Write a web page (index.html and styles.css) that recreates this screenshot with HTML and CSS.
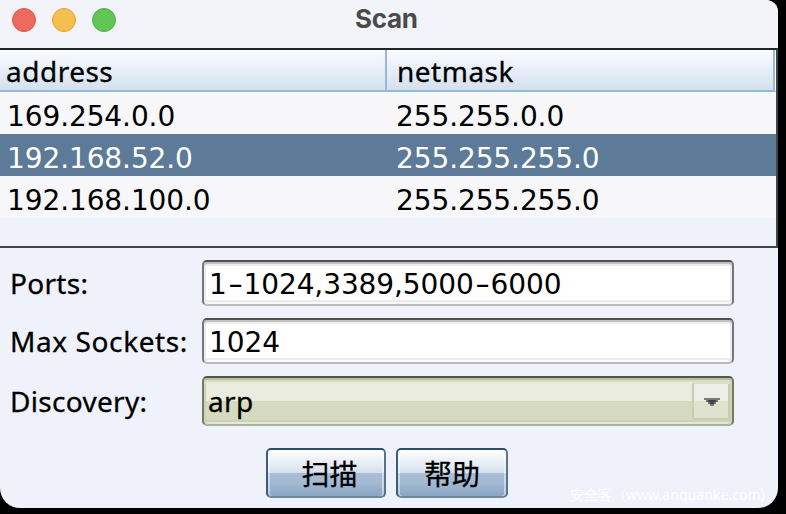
FILE: index.html
```html
<!DOCTYPE html>
<html lang="zh">
<head>
<meta charset="utf-8">
<title>Scan</title>
<link rel="stylesheet" href="styles.css">
</head>
<body>
<main class="window">
  <header class="titlebar">
    <div class="lights"><i class="light close"></i><i class="light minimize"></i><i class="light zoom"></i></div>
    <h1 class="title">Scan</h1>
  </header>
  <section class="table">
    <div class="row head"><span class="cell">address</span><span class="cell second">netmask</span></div>
    <div class="row"><span class="cell">169.254.0.0</span><span class="cell second">255.255.0.0</span></div>
    <div class="row selected"><span class="cell">192.168.52.0</span><span class="cell second">255.255.255.0</span></div>
    <div class="row"><span class="cell">192.168.100.0</span><span class="cell second">255.255.255.0</span></div>
  </section>
  <section class="form">
    <div class="label ports-label">Ports:</div>
    <div class="field digits">1<span class="dash">-</span>1024,3389,5000<span class="dash">-</span>6000</div>
    <div class="label sockets-label">Max Sockets:</div>
    <div class="field digits">1024</div>
    <div class="label discovery-label">Discovery:</div>
    <div class="field combo"><span>arp</span>
      <div class="drop"><svg width="16" height="8" viewBox="0 0 16 8" shape-rendering="crispEdges"><path fill="#777" d="M0 0h16v2h-2v2h-2v2h-2v2H6V6H4V4H2V2H0z"/><path fill="#444" d="M4 2h8v2h-2v2H6V4H4z"/></svg></div>
    </div>
  </section>
  <footer class="actions">
    <div class="button scan">扫描</div>
    <div class="button help">帮助</div>
  </footer>
</main>
<div class="watermark">安全客（ www.anquanke.com ）</div>
</body>
</html>
```
FILE: styles.css
```css
* { box-sizing: border-box; }
body {
  margin: 0;
  height: 514px;
  overflow: hidden;
  background: #000;
  color: #000;
  font: 28px/40px "Noto Sans", "Noto Sans CJK SC", sans-serif;
}
.window {
  position: relative;
  width: 778px;
  height: 508px;
  background: #eff2fb;
  border-radius: 0 12px 20px 20px;
  overflow: hidden;
}
.titlebar {
  height: 48px;
  background: #f3f4f9;
  display: grid;
  grid-template-columns: 355px 1fr;
}
.lights { display: flex; gap: 16px; padding: 8px 0 0 12px; }
.light { width: 24px; height: 24px; border-radius: 50%; border: 1px solid; }
.close { background: #ed6a5f; border-color: #d95549; }
.minimize { background: #f5bf50; border-color: #dba23d; }
.zoom { background: #62c655; border-color: #50ae43; }
.title {
  margin: 0;
  font: bold 26px/38px Inter, sans-serif;
  letter-spacing: -0.3px;
  color: #4a4a4b;
}
.table {
  height: 200px;
  border: solid #444;
  border-width: 2px 2px 2px 0;
  border-top-color: #242624;
}
.row {
  display: grid;
  grid-template-columns: 387px 1fr;
  grid-template-rows: 100%;
  height: 42px;
  background: #f7f7f9;
  font-family: "DejaVu Sans", sans-serif;
  line-height: 49px;
  letter-spacing: -0.1px;
}
.cell { padding-left: 7px; white-space: nowrap; }
.second { padding-left: 9px; }
.selected { background: #5d7a98; color: #fff; }
.head {
  position: relative;
  background: linear-gradient(#f9fbff, #edf2fc 35%, #d3e1ed);
  border-bottom: 2px solid #97b8d6;
  border-right: 1px solid #fff;
  font-family: "Noto Sans", sans-serif;
  line-height: 42px;
  letter-spacing: 0.5px;
}
.head, .label, .combo { -webkit-text-stroke: 0.3px #000; }
.head .cell { padding-left: 6px; border-right: 2px solid #97b8d6; }
.head .second { padding-left: 10px; }
.form {
  display: grid;
  grid-template-columns: 192px 532px;
  grid-template-rows: 46px 46px 50px;
  row-gap: 12px;
  padding: 12px 0 0 10px;
}
.label { line-height: 46px; letter-spacing: 0.3px; white-space: nowrap; }
.sockets-label { letter-spacing: 0.6px; }
.discovery-label { line-height: 50px; }
.field {
  border: 2px solid;
  border-color: #505050 #777 #bcbcbc #777;
  border-radius: 5px;
  background: #fff;
  box-shadow: inset 0 2px #c2c2c2, inset 0 4px #ececec, inset 2px 0 #ececec, inset -2px 0 #ececec, inset 0 -2px #fafafa, inset 0 -4px #ececec;
  padding-left: 5px;
  line-height: 46px;
  white-space: nowrap;
}
.digits { font-family: "DejaVu Sans", sans-serif; letter-spacing: -0.1px; }
.dash { display: inline-block; width: 16.8px; text-align: center; transform: scaleX(1.5); }
.combo {
  display: flex;
  justify-content: space-between;
  padding: 4px 2px 4px 4px;
  border-color: #55583f #777b61 #aeb29b #777b61;
  background: linear-gradient(#eaecdf 23px, #d6dabe 23px);
  box-shadow: inset 0 2px #b9bda8, inset 0 4px #d7dbc8, inset 2px 0 #ced3b8, inset -2px 0 #ced3b8, inset 0 -2px #e5e8d8, inset 0 -4px #cdd1bc;
  line-height: 38px;
  letter-spacing: 0.4px;
}
.drop {
  width: 38px;
  height: 38px;
  padding: 1px 0 0 2px;
  display: grid;
  place-items: center;
  border: 2px solid #c8ccb5;
  border-top-color: #dcdfd0;
  border-radius: 3px;
  background: linear-gradient(#edeee5 17px, #dfe3cd 17px);
}
.drop svg { display: block; }
.actions { display: flex; gap: 10px; padding: 22px 0 0 266px; }
.button {
  height: 50px;
  border: 2px solid;
  border-color: #2c4d6d #557593 #6b87a4 #3b5c7d;
  border-radius: 5px;
  background: linear-gradient(#fff, #d5e0eb 23px, #a9bed6 23px, #a4bad3 32px, #8aa6c4);
  box-shadow: inset 2px 0 rgba(255,255,255,.45), inset -2px 0 rgba(255,255,255,.45);
  text-align: center;
  font: 28px/46px "Noto Sans CJK SC", sans-serif;
  -webkit-text-stroke: 0.3px #000;
}
.scan { width: 120px; padding-left: 7px; }
.help { width: 112px; }
.watermark {
  position: absolute;
  left: 570px;
  top: 484px;
  color: rgba(255,255,255,.85);
  font: 14px/22px "Noto Sans", "Noto Sans CJK SC", sans-serif;
  word-spacing: -4px;
  letter-spacing: 0.05px;
  white-space: nowrap;
}
```
